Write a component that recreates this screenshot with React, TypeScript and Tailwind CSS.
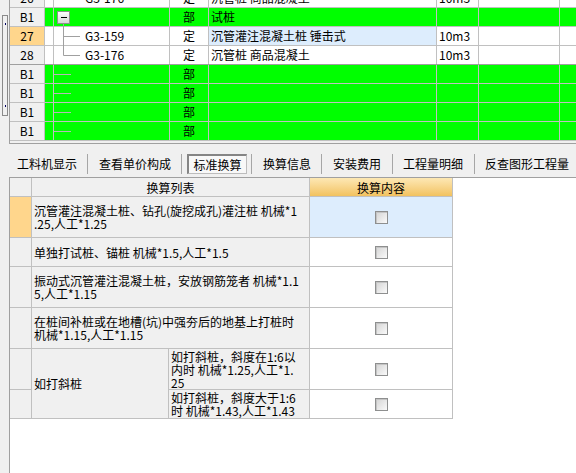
import React from "react";

type Kind = "box" | "mid" | "last" | "tick" | "none";

function TreeSvg({ kind }: { kind: Kind }) {
  if (kind === "none") return null;
  return (
    <svg className="absolute left-0 top-0 overflow-visible" width="115" height="19">
      <defs>
        <linearGradient id="cbg" x1="0" y1="0" x2="0" y2="1">
          <stop offset="0" stopColor="#ffffff" />
          <stop offset="1" stopColor="#d6d6d6" />
        </linearGradient>
      </defs>
      {kind === "box" && (
        <>
          <line x1="9.5" y1="16" x2="9.5" y2="19" stroke="#a0a0a0" />
          <rect x="3.5" y="3.5" width="12" height="12" fill="url(#cbg)" stroke="#8f8f8f" />
          <line x1="7" y1="9.5" x2="13" y2="9.5" stroke="#000" />
        </>
      )}
      {kind === "mid" && (
        <>
          <line x1="9.5" y1="0" x2="9.5" y2="19" stroke="#a0a0a0" />
          <line x1="9.5" y1="9.5" x2="26" y2="9.5" stroke="#a0a0a0" />
        </>
      )}
      {kind === "last" && (
        <>
          <line x1="9.5" y1="0" x2="9.5" y2="9.5" stroke="#a0a0a0" />
          <line x1="9.5" y1="9.5" x2="26" y2="9.5" stroke="#a0a0a0" />
        </>
      )}
      {kind === "tick" && <line x1="0" y1="9.5" x2="17" y2="9.5" stroke="#b8b8b8" />}
    </svg>
  );
}

type R = {
  hdr: string;
  hdrOrange?: boolean;
  green?: boolean;
  tree: Kind;
  code?: string;
  type: string;
  name?: string;
  nameBlue?: boolean;
  unit?: string;
  dark?: boolean;
};

function TopRow({ r }: { r: R }) {
  const bg = r.green ? "bg-[#00ff00]" : "bg-white";
  return (
    <div
      className={`flex h-[19px] shrink-0 border-b ${
        r.dark ? "border-[#a0a0a0]" : "border-[#c0c0c0]"
      }`}
    >
      <div
        className={`w-[35px] shrink-0 border-r border-[#c0c0c0] flex items-center justify-center ${
          r.hdrOrange ? "bg-[#ffd68c]" : "bg-[#f0f0f0]"
        }`}
      >
        {r.hdr}
      </div>
      <div className={`w-[9px] shrink-0 border-r border-[#c0c0c0] ${bg}`} />
      <div className={`w-[116px] shrink-0 border-r border-[#c0c0c0] relative flex items-center pl-[31px] ${bg}`}>
        <TreeSvg kind={r.tree} />
        <span className="relative">{r.code}</span>
      </div>
      <div className={`w-[39px] shrink-0 border-r border-[#c0c0c0] flex items-center justify-center ${bg}`}>
        {r.type}
      </div>
      <div
        className={`w-[228px] shrink-0 border-r border-[#c0c0c0] flex items-center pl-[2px] whitespace-nowrap ${
          r.nameBlue ? "bg-[#ddedfd]" : bg
        }`}
      >
        {r.name}
      </div>
      <div className={`w-[42px] shrink-0 border-r border-[#c0c0c0] flex items-center pl-[2px] ${bg}`}>{r.unit}</div>
      <div className={`w-[81px] shrink-0 border-r border-[#c0c0c0] ${bg}`} />
      <div className={`flex-1 ${bg}`} />
    </div>
  );
}

const rows: R[] = [
  { hdr: "B1", green: true, tree: "box", type: "部", name: "试桩" },
  {
    hdr: "27",
    hdrOrange: true,
    tree: "mid",
    code: "G3-159",
    type: "定",
    name: "沉管灌注混凝土桩 锤击式",
    nameBlue: true,
    unit: "10m3",
  },
  { hdr: "28", tree: "last", code: "G3-176", type: "定", name: "沉管桩 商品混凝土", unit: "10m3", dark: true },
  { hdr: "B1", green: true, tree: "tick", type: "部" },
  { hdr: "B1", green: true, tree: "tick", type: "部" },
  { hdr: "B1", green: true, tree: "tick", type: "部" },
  { hdr: "B1", green: true, tree: "tick", type: "部" },
];

function Check() {
  return (
    <div className="w-[13px] h-[13px] border border-[#8e8f8f] bg-linear-to-br from-[#d4d4d4] to-[#fafafa] shadow-[inset_1px_1px_0_#c4c4c4]" />
  );
}

function Sep({ ml }: { ml: string }) {
  return <div className={`w-px h-[20px] bg-[#a6a6a6] shrink-0 ${ml}`} />;
}

const cell = "border-r border-b border-[#c0c0c0]";
const txt = "flex items-center pl-[2px] whitespace-nowrap overflow-hidden bg-[#f0f0f0]";

export default function App() {
  return (
    <div className="w-[576px] h-[473px] bg-[#f0f0f0] flex flex-col overflow-hidden font-['Noto_Sans_CJK_SC',sans-serif] text-[12px] text-black">
      {/* top panel */}
      <div className="flex h-[144px] shrink-0">
        <div className="w-[9px] shrink-0 flex flex-col pt-[15px] pl-[2px]">
          <div className="w-[6px] h-[101px] border border-[#8a8a8a] flex flex-col items-center justify-between pt-[7px] pb-[8px]">
            <div className="w-px h-[2px] bg-[#000060]" />
            <div className="w-px h-[2px] bg-[#000060]" />
          </div>
        </div>
        <div className="flex-1 border-l border-b border-[#a0a0a0] flex flex-col overflow-hidden leading-[12px]">
          <div className="h-[8px] shrink-0 overflow-hidden flex flex-col justify-end">
            <TopRow r={{ hdr: "26", tree: "none", code: "G3-176", type: "定", name: "沉管桩 商品混凝土", unit: "10m3" }} />
          </div>
          {rows.map((r, i) => (
            <TopRow key={i} r={r} />
          ))}
        </div>
      </div>

      {/* tabs */}
      <div className="h-[33px] shrink-0 flex items-start pt-[10px] pl-[17px] whitespace-nowrap">
        <div className="w-[60px] h-[20px] flex items-center shrink-0">工料机显示</div>
        <Sep ml="ml-[10px]" />
        <div className="w-[72px] h-[20px] flex items-center shrink-0 ml-[11px]">查看单价构成</div>
        <Sep ml="ml-[10px]" />
        <div className="w-[60px] h-[20px] ml-[5px] shrink-0 flex items-center justify-center bg-[#f8f8f8] border-t-2 border-l-2 border-r border-b border-[#858585] border-r-[#bdbdbd] border-b-[#bdbdbd]">
          标准换算
        </div>
        <Sep ml="ml-[4px]" />
        <div className="w-[48px] h-[20px] flex items-center shrink-0 ml-[11px]">换算信息</div>
        <Sep ml="ml-[10px]" />
        <div className="w-[48px] h-[20px] flex items-center shrink-0 ml-[11px]">安装费用</div>
        <Sep ml="ml-[11px]" />
        <div className="w-[60px] h-[20px] flex items-center shrink-0 ml-[10px]">工程量明细</div>
        <Sep ml="ml-[11px]" />
        <div className="w-[84px] h-[20px] flex items-center shrink-0 ml-[10px]">反查图形工程量</div>
      </div>

      {/* lower panel */}
      <div className="flex flex-1">
        <div className="w-[9px] shrink-0" />
        <div className="flex-1 bg-white border-l border-t border-[#a0a0a0]">
          <div className="grid grid-cols-[22px_137px_141px_143px] grid-rows-[19px_41px_29px_41px_41px_41px_29px] w-[443px] leading-[13px]">
            <div className={`${cell} bg-[#f0f0f0]`} />
            <div className={`${cell} col-span-2 bg-[#f0f0f0] flex items-center justify-center`}>换算列表</div>
            <div className={`${cell} bg-linear-to-b from-[#fde8b4] to-[#f2c25e] flex items-center justify-center`}>
              换算内容
            </div>

            <div className={`${cell} bg-[#ffd68c]`} />
            <div className={`${cell} col-span-2 ${txt}`}>
              <div>
                沉管灌注混凝土桩、钻孔(旋挖成孔)灌注桩 机械*1
                <br />
                .25,人工*1.25
              </div>
            </div>
            <div className={`${cell} bg-[#ddedfd] flex items-center justify-center`}>
              <Check />
            </div>

            <div className={`${cell} bg-[#f0f0f0]`} />
            <div className={`${cell} col-span-2 ${txt}`}>单独打试桩、锚桩 机械*1.5,人工*1.5</div>
            <div className={`${cell} bg-white flex items-center justify-center`}>
              <Check />
            </div>

            <div className={`${cell} bg-[#f0f0f0]`} />
            <div className={`${cell} col-span-2 ${txt}`}>
              <div>
                振动式沉管灌注混凝土桩，安放钢筋笼者 机械*1.1
                <br />
                5,人工*1.15
              </div>
            </div>
            <div className={`${cell} bg-white flex items-center justify-center`}>
              <Check />
            </div>

            <div className={`${cell} bg-[#f0f0f0]`} />
            <div className={`${cell} col-span-2 ${txt}`}>
              <div>
                在桩间补桩或在地槽(坑)中强夯后的地基上打桩时
                <br />
                机械*1.15,人工*1.15
              </div>
            </div>
            <div className={`${cell} bg-white flex items-center justify-center`}>
              <Check />
            </div>

            <div className={`${cell} bg-[#f0f0f0] col-start-1 row-start-6`} />
            <div className={`${cell} row-span-2 col-start-2 row-start-6 ${txt}`}>如打斜桩</div>
            <div className={`${cell} col-start-3 row-start-6 ${txt}`}>
              <div>
                如打斜桩，斜度在1:6以
                <br />
                内时 机械*1.25,人工*1.
                <br />
                25
              </div>
            </div>
            <div className={`${cell} col-start-4 row-start-6 bg-white flex items-center justify-center`}>
              <Check />
            </div>

            <div className={`${cell} bg-[#f0f0f0] col-start-1 row-start-7`} />
            <div className={`${cell} col-start-3 row-start-7 ${txt}`}>
              <div>
                如打斜桩，斜度大于1:6
                <br />
                时 机械*1.43,人工*1.43
              </div>
            </div>
            <div className={`${cell} col-start-4 row-start-7 bg-white flex items-center justify-center`}>
              <Check />
            </div>
          </div>
        </div>
      </div>
    </div>
  );
}
